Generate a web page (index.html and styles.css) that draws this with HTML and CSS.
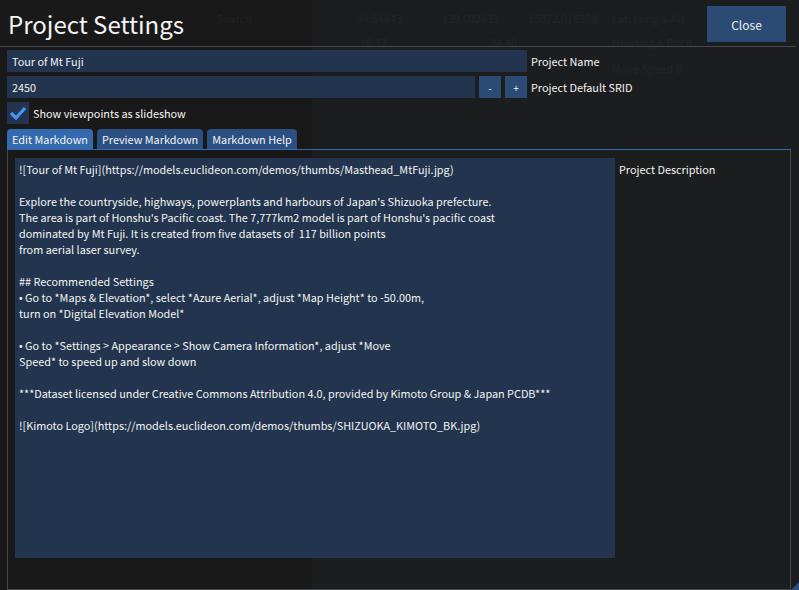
FILE: index.html
```html
<!DOCTYPE html>
<html>
<head>
<meta charset="utf-8">
<link rel="stylesheet" href="styles.css">
</head>
<body>
<div class="backdrop">
  <div class="bg-panel"></div>
  <span class="ghost g-search">Search</span>
  <span class="ghost g1">34.54843</span>
  <span class="ghost g2">139.002633</span>
  <span class="ghost g3">15072.016339</span>
  <span class="ghost g4">Lat, Long &amp; Alt</span>
  <span class="ghost g5">16.17</span>
  <span class="ghost g6">34.40</span>
  <span class="ghost g7">Heading &amp; Pitch</span>
  <span class="ghost g8">Move Speed 0</span>
  <span class="ghost g9">Substation</span>
</div>
<div class="window">
  <header class="titlebar">
    <h1 class="title">Project Settings</h1>
    <button class="btn close">Close</button>
  </header>
  <div class="content">
    <div class="row">
      <div class="input name">Tour of Mt Fuji</div>
      <span class="label">Project Name</span>
    </div>
    <div class="row">
      <div class="input srid">2450</div>
      <button class="btn step">-</button>
      <button class="btn step">+</button>
      <span class="label">Project Default SRID</span>
    </div>
    <div class="row checkrow">
      <span class="checkbox"><svg width="22" height="22" viewBox="0 0 22 22"><polyline points="4,11 9,16 18,6" fill="none" stroke="#4296fa" stroke-width="3.2" stroke-linecap="butt" stroke-linejoin="miter"/></svg></span>
      <span class="label">Show viewpoints as slideshow</span>
    </div>
    <div class="tabs">
      <span class="tab active">Edit Markdown</span>
      <span class="tab">Preview Markdown</span>
      <span class="tab">Markdown Help</span>
    </div>
    <div class="child">
      <div class="textarea">
<div class="ln">![Tour of Mt Fuji](https://models.euclideon.com/demos/thumbs/Masthead_MtFuji.jpg)</div>
<div class="ln">&nbsp;</div>
<div class="ln">Explore the countryside, highways, powerplants and harbours of Japan's Shizuoka prefecture.</div>
<div class="ln">The area is part of Honshu's Pacific coast. The 7,777km2 model is part of Honshu's pacific coast</div>
<div class="ln">dominated by Mt Fuji. It is created from five datasets of &nbsp;117 billion points</div>
<div class="ln">from aerial laser survey.</div>
<div class="ln">&nbsp;</div>
<div class="ln">## Recommended Settings</div>
<div class="ln">• Go to *Maps &amp; Elevation*, select *Azure Aerial*, adjust *Map Height* to -50.00m,</div>
<div class="ln">turn on *Digital Elevation Model*</div>
<div class="ln">&nbsp;</div>
<div class="ln">• Go to *Settings &gt; Appearance &gt; Show Camera Information*, adjust *Move</div>
<div class="ln">Speed* to speed up and slow down</div>
<div class="ln">&nbsp;</div>
<div class="ln">***Dataset licensed under Creative Commons Attribution 4.0, provided by Kimoto Group &amp; Japan PCDB***</div>
<div class="ln">&nbsp;</div>
<div class="ln">![Kimoto Logo](https://models.euclideon.com/demos/thumbs/SHIZUOKA_KIMOTO_BK.jpg)</div>
      </div>
      <span class="label desc">Project Description</span>
    </div>
  </div>
  <span class="grip"></span>
</div>
</body>
</html>
```

FILE: styles.css
```css
* { box-sizing: border-box; }
html, body { margin: 0; padding: 0; }
body {
  width: 799px;
  height: 590px;
  overflow: hidden;
  background: #191919;
  font-family: "Noto Sans CJK JP", "Noto Sans", sans-serif;
  font-size: 10.85px;
  color: #f4f4f4;
  position: relative;
}
.backdrop { position: absolute; inset: 0; }
.bg-panel { position: absolute; left: 312px; top: 0; right: 0; bottom: 0; background: #1c1d1f; }
.ghost { position: absolute; color: #242528; font-size: 10.85px; line-height: 16px; }
.g-search { left: 217px; top: 10px; color: #222222; }
.g1 { left: 357px; top: 10px; }
.g2 { left: 442px; top: 10px; }
.g3 { left: 528px; top: 10px; }
.g4 { left: 612px; top: 10px; }
.g5 { left: 360px; top: 34px; }
.g6 { left: 490px; top: 34px; }
.g7 { left: 612px; top: 34px; }
.g8 { left: 612px; top: 60px; }
.g9 { left: 20px; top: 510px; color: #212121; }

.window {
  position: relative;
  width: 797px;
  height: 590px;
  display: flex;
  flex-direction: column;
}
.titlebar {
  height: 47px;
  border-bottom: 1px solid #46464f;
  margin-right: 1px;
  display: flex;
  align-items: flex-start;
  justify-content: space-between;
  padding: 0 10px 0 8px;
}
.title {
  margin: 0;
  font-weight: normal;
  font-size: 24px;
  line-height: 30px;
  padding-top: 9px;
  color: #f4f4f4;
}
.btn {
  border: none;
  background: #2b4b74;
  color: #f0f0f0;
  font-family: inherit;
  font-size: 10.85px;
  padding: 0;
  margin: 0;
}
.close { width: 79px; height: 36px; margin-top: 6px; font-size: 12px; }
.content {
  flex: 1;
  display: flex;
  flex-direction: column;
  padding: 3px 0 0 7px;
}
.row {
  display: flex;
  align-items: center;
  gap: 4px;
  height: 22px;
  margin-bottom: 4px;
}
.input {
  height: 22px;
  background: #23344f;
  padding: 0 4px 0 5px;
  line-height: 22px;
  white-space: nowrap;
}
.name { width: 520px; }
.srid { width: 468px; }
.step { width: 22px; height: 22px; font-size: 10px; }
.label { white-space: nowrap; line-height: 22px; }
.checkrow { height: 22px; margin-bottom: 4px; }
.checkbox { width: 22px; height: 22px; background: #23344f; display: block; }
.checkbox svg { display: block; }
.tabs {
  display: flex;
  gap: 4px;
  height: 22px;
  border-bottom: 1px solid #3369ad;
  margin-right: 6px;
  padding-top: 1px;
}
.tab {
  background: #2b4f80;
  border-radius: 4px 4px 0 0;
  padding: 0 5px;
  line-height: 20px;
  height: 20px;
  white-space: nowrap;
}
.tab.active { background: #3369ad; }
.child {
  flex: 1;
  margin-right: 6px;
  border: 1px solid #46464f;
  border-top: none;
  display: flex;
  align-items: flex-start;
  gap: 4px;
  padding: 8px 0 0 7px;
}
.textarea {
  width: 600px;
  height: 400px;
  background: #22344e;
  padding: 3px 4px 0;
  line-height: 16px;
}
.ln { white-space: pre; height: 16px; }
.desc { line-height: 16px; padding-top: 3px; }
.grip {
  position: absolute;
  right: -2px;
  bottom: 0;
  width: 0;
  height: 0;
  border-left: 8px solid transparent;
  border-bottom: 8px solid #2b4f80;
}
```
